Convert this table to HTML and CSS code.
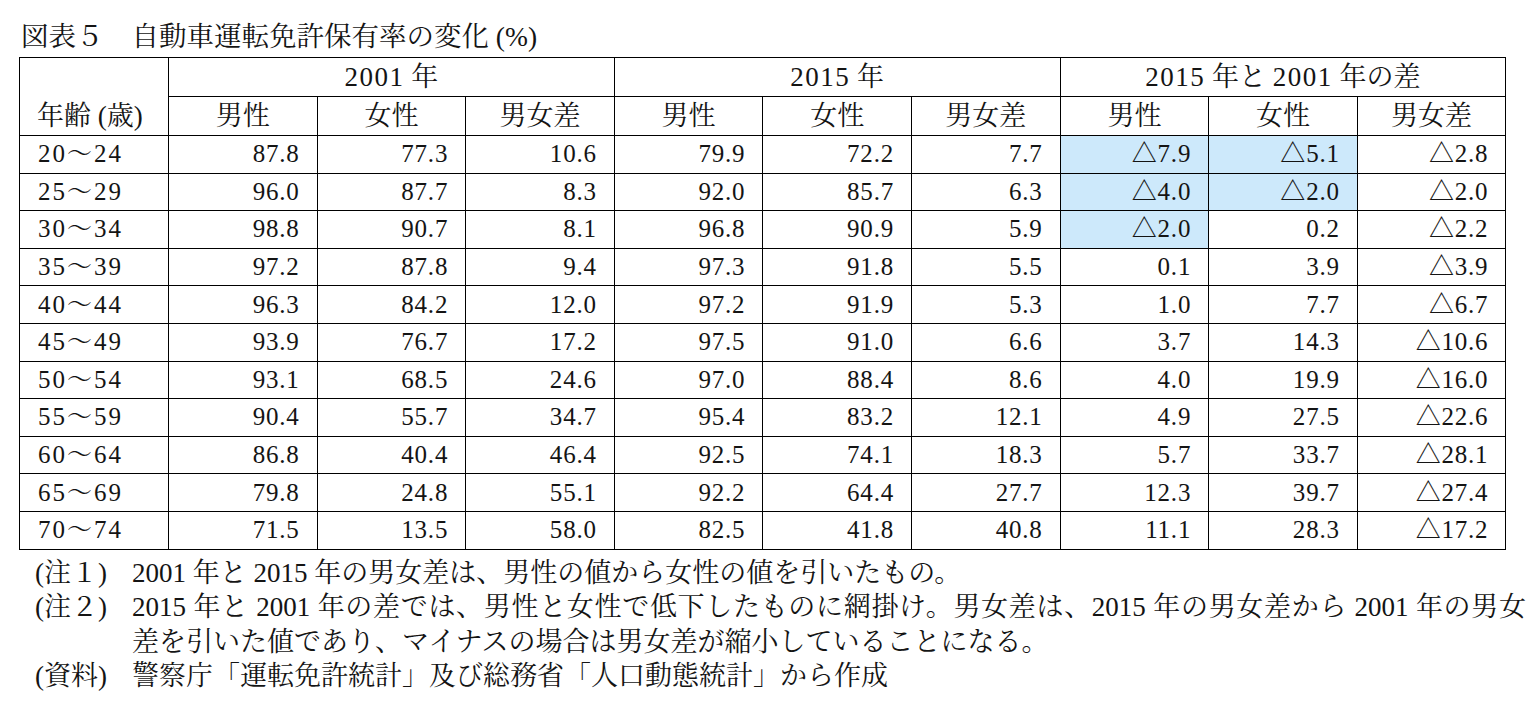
FILE: index.html
```html
<!DOCTYPE html>
<html lang="ja">
<head>
<meta charset="utf-8">
<link rel="stylesheet" href="styles.css">
</head>
<body>
<div class="page">
  <h1 class="title"><span class="fig">図表５</span>自動車運転免許保有率の変化 (%)</h1>
  <table class="tbl">
    <colgroup>
      <col class="c-age">
      <col><col><col><col><col><col><col><col><col>
    </colgroup>
    <thead>
      <tr class="hr1">
        <th rowspan="2" class="age-h">年齢 (歳)</th>
        <th colspan="3"><span class="n">2001</span> 年</th>
        <th colspan="3"><span class="n">2015</span> 年</th>
        <th colspan="3"><span class="n">2015</span> 年と <span class="n">2001</span> 年の差</th>
      </tr>
      <tr class="hr2">
        <th>男性</th><th>女性</th><th>男女差</th>
        <th>男性</th><th>女性</th><th>男女差</th>
        <th>男性</th><th>女性</th><th>男女差</th>
      </tr>
    </thead>
    <tbody>
      <tr><td class="age">20～24</td><td>87.8</td><td>77.3</td><td>10.6</td><td>79.9</td><td>72.2</td><td>7.7</td><td class="hl">△7.9</td><td class="hl">△5.1</td><td>△2.8</td></tr>
      <tr><td class="age">25～29</td><td>96.0</td><td>87.7</td><td>8.3</td><td>92.0</td><td>85.7</td><td>6.3</td><td class="hl">△4.0</td><td class="hl">△2.0</td><td>△2.0</td></tr>
      <tr><td class="age">30～34</td><td>98.8</td><td>90.7</td><td>8.1</td><td>96.8</td><td>90.9</td><td>5.9</td><td class="hl">△2.0</td><td>0.2</td><td>△2.2</td></tr>
      <tr><td class="age">35～39</td><td>97.2</td><td>87.8</td><td>9.4</td><td>97.3</td><td>91.8</td><td>5.5</td><td>0.1</td><td>3.9</td><td>△3.9</td></tr>
      <tr><td class="age">40～44</td><td>96.3</td><td>84.2</td><td>12.0</td><td>97.2</td><td>91.9</td><td>5.3</td><td>1.0</td><td>7.7</td><td>△6.7</td></tr>
      <tr><td class="age">45～49</td><td>93.9</td><td>76.7</td><td>17.2</td><td>97.5</td><td>91.0</td><td>6.6</td><td>3.7</td><td>14.3</td><td>△10.6</td></tr>
      <tr><td class="age">50～54</td><td>93.1</td><td>68.5</td><td>24.6</td><td>97.0</td><td>88.4</td><td>8.6</td><td>4.0</td><td>19.9</td><td>△16.0</td></tr>
      <tr><td class="age">55～59</td><td>90.4</td><td>55.7</td><td>34.7</td><td>95.4</td><td>83.2</td><td>12.1</td><td>4.9</td><td>27.5</td><td>△22.6</td></tr>
      <tr><td class="age">60～64</td><td>86.8</td><td>40.4</td><td>46.4</td><td>92.5</td><td>74.1</td><td>18.3</td><td>5.7</td><td>33.7</td><td>△28.1</td></tr>
      <tr><td class="age">65～69</td><td>79.8</td><td>24.8</td><td>55.1</td><td>92.2</td><td>64.4</td><td>27.7</td><td>12.3</td><td>39.7</td><td>△27.4</td></tr>
      <tr><td class="age">70～74</td><td>71.5</td><td>13.5</td><td>58.0</td><td>82.5</td><td>41.8</td><td>40.8</td><td>11.1</td><td>28.3</td><td>△17.2</td></tr>
    </tbody>
  </table>
  <div class="notes">
    <div class="note-label">(注１)</div>
    <div class="note-text">2001 年と 2015 年の男女差は、男性の値から女性の値を引いたもの。</div>
    <div class="note-label">(注２)</div>
    <div class="note-text">
      <div class="just">2015 年と 2001 年の差では、男性と女性で低下したものに網掛け。男女差は、2015 年の男女差から 2001 年の男女</div>
      <div>差を引いた値であり、マイナスの場合は男女差が縮小していることになる。</div>
    </div>
    <div class="note-label">(資料)</div>
    <div class="note-text">警察庁「運転免許統計」及び総務省「人口動態統計」から作成</div>
  </div>
</div>
</body>
</html>
```

FILE: styles.css
```css
html, body {
  margin: 0;
  padding: 0;
  background: #ffffff;
}
body {
  font-family: "Liberation Serif", "Noto Serif CJK JP", "Noto Sans CJK JP", serif;
  color: #141414;
}
.page {
  padding: 22px 0 0 19px;
}
.title {
  margin: 0 0 5px 2px;
  font-size: 27.5px;
  font-weight: normal;
  line-height: 30px;
  white-space: nowrap;
}
.title .fig {
  margin-right: 28px;
}
.tbl {
  border-collapse: collapse;
  table-layout: fixed;
  width: 1487px;
}
.tbl col { width: 148.6px; }
.tbl col.c-age { width: 149px; }
.tbl th, .tbl td {
  border: 1px solid #000;
  padding: 0;
  font-weight: normal;
  white-space: nowrap;
}
.tbl th {
  font-size: 27px;
  text-align: center;
  height: 37px;
  line-height: 38px;
}
.tbl th .n {
  letter-spacing: 1.5px;
}
.tbl th.age-h {
  vertical-align: bottom;
  text-align: left;
  padding-left: 17px;
  line-height: 38px;
}
.tbl td {
  font-size: 25px;
  letter-spacing: 0.8px;
  text-align: right;
  padding-right: 17px;
  height: 36.6px;
  line-height: 36px;
}
.tbl td.age {
  text-align: left;
  padding-left: 18px;
  padding-right: 0;
  letter-spacing: 2px;
}
.tbl td.hl {
  background: #cde9fb;
}
.notes {
  display: grid;
  grid-template-columns: 97px 1394px;
  margin-left: 16px;
  margin-top: 6px;
  font-size: 27px;
  line-height: 34.6px;
  white-space: nowrap;
}
.note-label {
  letter-spacing: 0;
}
.just {
  text-align: justify;
  text-align-last: justify;
}
```
